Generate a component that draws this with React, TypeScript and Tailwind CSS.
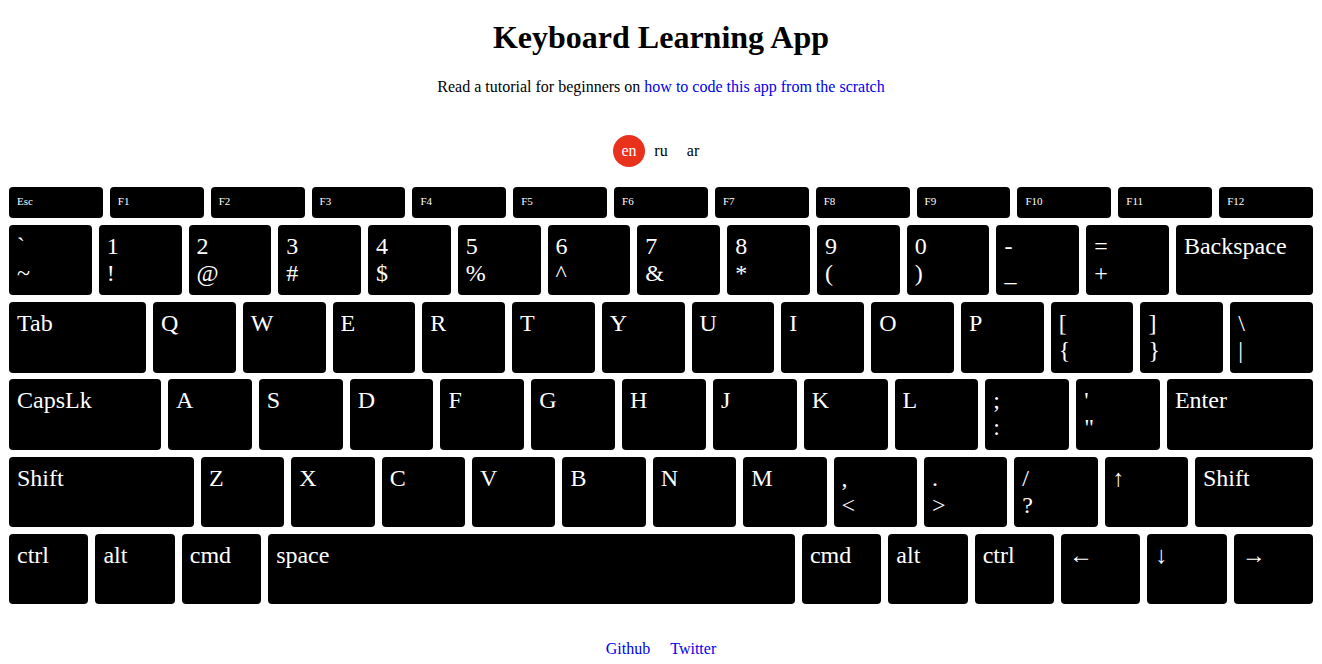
import React from "react"

type KeyDef = { top: string; bottom?: string; w?: string }

const fnKeys = ["Esc", "F1", "F2", "F3", "F4", "F5", "F6", "F7", "F8", "F9", "F10", "F11", "F12"]

const rows: KeyDef[][] = [
  [
    { top: "`", bottom: "~" },
    { top: "1", bottom: "!" },
    { top: "2", bottom: "@" },
    { top: "3", bottom: "#" },
    { top: "4", bottom: "$" },
    { top: "5", bottom: "%" },
    { top: "6", bottom: "^" },
    { top: "7", bottom: "&" },
    { top: "8", bottom: "*" },
    { top: "9", bottom: "(" },
    { top: "0", bottom: ")" },
    { top: "-", bottom: "_" },
    { top: "=", bottom: "+" },
    { top: "Backspace", w: "w-[137px] shrink-0" },
  ],
  [
    { top: "Tab", w: "w-[137px] shrink-0" },
    { top: "Q" },
    { top: "W" },
    { top: "E" },
    { top: "R" },
    { top: "T" },
    { top: "Y" },
    { top: "U" },
    { top: "I" },
    { top: "O" },
    { top: "P" },
    { top: "[", bottom: "{" },
    { top: "]", bottom: "}" },
    { top: "\\", bottom: "|" },
  ],
  [
    { top: "CapsLk", w: "w-[152px] shrink-0" },
    { top: "A" },
    { top: "S" },
    { top: "D" },
    { top: "F" },
    { top: "G" },
    { top: "H" },
    { top: "J" },
    { top: "K" },
    { top: "L" },
    { top: ";", bottom: ":" },
    { top: "'", bottom: "\"" },
    { top: "Enter", w: "w-[146px] shrink-0" },
  ],
  [
    { top: "Shift", w: "w-[185px] shrink-0" },
    { top: "Z" },
    { top: "X" },
    { top: "C" },
    { top: "V" },
    { top: "B" },
    { top: "N" },
    { top: "M" },
    { top: ",", bottom: "<" },
    { top: ".", bottom: ">" },
    { top: "/", bottom: "?" },
    { top: "↑" },
    { top: "Shift", w: "w-[118px] shrink-0" },
  ],
  [
    { top: "ctrl", w: "w-[79.2px] shrink-0" },
    { top: "alt", w: "w-[79.2px] shrink-0" },
    { top: "cmd", w: "w-[79.2px] shrink-0" },
    { top: "space" },
    { top: "cmd", w: "w-[79.2px] shrink-0" },
    { top: "alt", w: "w-[79.2px] shrink-0" },
    { top: "ctrl", w: "w-[79.2px] shrink-0" },
    { top: "←", w: "w-[79.2px] shrink-0" },
    { top: "↓", w: "w-[79.2px] shrink-0" },
    { top: "→", w: "w-[79.2px] shrink-0" },
  ],
]

function Key({ k }: { k: KeyDef }) {
  return (
    <div
      className={`${k.w ?? "flex-1"} h-[70.5px] bg-black text-white rounded-[4px] pl-2 pt-2 text-[24px] leading-[27px] overflow-hidden`}
    >
      <div>{k.top}</div>
      {k.bottom && <div>{k.bottom}</div>}
    </div>
  )
}

export default function App() {
  return (
    <div className="w-full h-[664px] overflow-hidden bg-white text-black font-['Liberation_Serif','Times_New_Roman',serif]">
      <h1 className="pt-[19px] text-center text-[32px] font-bold leading-[37px]">
        Keyboard Learning App
      </h1>
      <p className="mt-[22px] text-center text-[16px] leading-[18px]">
        Read a tutorial for beginners on{" "}
        <a href="#" className="text-[#0000ee]">how to code this app from the scratch</a>
      </p>

      <div className="mt-[39px] flex justify-center text-[16px]">
        <button className="w-8 h-8 rounded-full bg-[#e8321c] text-white leading-8">en</button>
        <button className="w-8 h-8 leading-8">ru</button>
        <button className="w-8 h-8 leading-8">ar</button>
      </div>

      {/* keyboard */}
      <div className="mt-[20px] px-[9px] flex flex-col gap-[6.75px]">
        <div className="flex gap-[7px]">
          {fnKeys.map((f) => (
            <div
              key={f}
              className="flex-1 h-[31px] bg-black text-white rounded-[4px] pl-2 pt-2 text-[11px] leading-[12px]"
            >
              {f}
            </div>
          ))}
        </div>
        {rows.map((row, i) => (
          <div key={i} className={`flex ${i === 4 ? "gap-[7.2px]" : "gap-[7px]"}`}>
            {row.map((k, j) => (
              <Key key={j} k={k} />
            ))}
          </div>
        ))}
      </div>

      <div className="mt-[36px] flex justify-center gap-5 text-[16px] leading-[18px]">
        <a href="#" className="text-[#0000ee]">Github</a>
        <a href="#" className="text-[#0000ee]">Twitter</a>
      </div>
    </div>
  )
}
